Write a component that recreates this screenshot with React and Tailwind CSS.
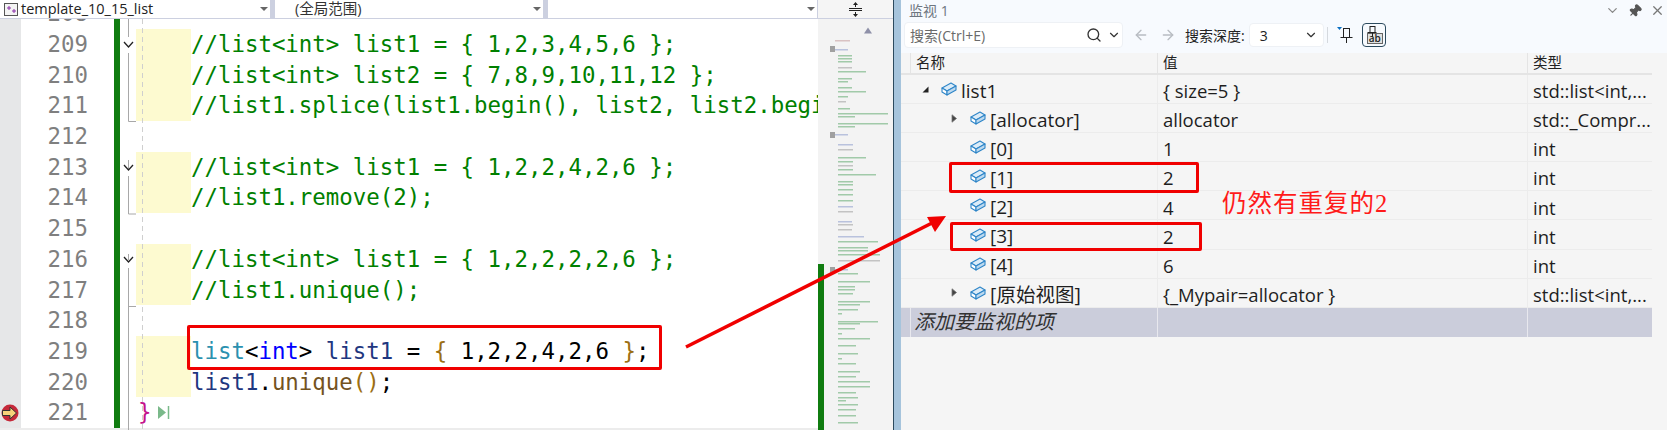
import React from "react";
import { Search, ChevronDown, ArrowLeft, ArrowRight, X, Pin } from "lucide-react";

const cm = "text-[#008000]";
const ty = "text-[#2b91af]";
const kw = "text-[#0000ff]";
const vr = "text-[#1f377f]";
const br = "text-[#9c6f13]";
const fn = "text-[#74531f]";

const codeLines = [
  { n: 208, mark: false },
  { n: 209, mark: true, code: [[cm, "//list<int> list1 = { 1,2,3,4,5,6 };"]] },
  { n: 210, mark: true, code: [[cm, "//list<int> list2 = { 7,8,9,10,11,12 };"]] },
  { n: 211, mark: true, code: [[cm, "//list1.splice(list1.begin(), list2, list2.begin());"]] },
  { n: 212, mark: false },
  { n: 213, mark: true, code: [[cm, "//list<int> list1 = { 1,2,2,4,2,6 };"]] },
  { n: 214, mark: true, code: [[cm, "//list1.remove(2);"]] },
  { n: 215, mark: false },
  { n: 216, mark: true, code: [[cm, "//list<int> list1 = { 1,2,2,2,2,6 };"]] },
  { n: 217, mark: true, code: [[cm, "//list1.unique();"]] },
  { n: 218, mark: false },
  {
    n: 219,
    mark: true,
    code: [
      [ty, "list"],
      ["text-black", "<"],
      [kw, "int"],
      ["text-black", "> "],
      [vr, "list1"],
      ["text-black", " = "],
      [br, "{"],
      ["text-black", " 1,2,2,4,2,6 "],
      [br, "}"],
      ["text-black", ";"],
    ],
  },
  {
    n: 220,
    mark: true,
    code: [
      [vr, "list1"],
      ["text-black", "."],
      [fn, "unique"],
      [br, "()"],
      ["text-black", ";"],
    ],
  },
];

// tiny code overview: y, x1, x2, colour (page coordinates minus the minimap origin)
const G = "#3f9a4f";
const S = "#8a8a8a";
const B = "#7488c4";
const miniRows = [
  [21, 17, 32, "#b88"], [30, 17, 30, B], [36, 20, 34, G], [39, 20, 34, G], [42, 20, 34, G],
  [48, 20, 34, S], [52, 20, 48, G], [59, 20, 34, G], [62, 20, 30, G], [68, 20, 34, G],
  [72, 20, 48, G], [77, 20, 30, G], [82, 20, 28, S], [89, 20, 32, G], [94, 20, 70, G],
  [97, 20, 37, G], [104, 20, 70, G], [107, 20, 37, G], [115, 17, 30, B], [125, 20, 35, B],
  [130, 20, 35, S], [138, 20, 48, G], [142, 20, 35, G], [146, 20, 35, S], [150, 20, 35, G],
  [155, 20, 58, G], [162, 20, 35, G], [165, 20, 35, G], [170, 20, 35, G], [175, 20, 35, G],
  [181, 20, 35, G], [187, 20, 35, B], [192, 20, 35, S], [202, 20, 34, B], [205, 20, 35, S],
  [210, 20, 34, S], [217, 20, 46, B], [222, 20, 60, G], [228, 20, 50, G], [231, 20, 50, G],
  [235, 20, 62, G], [241, 20, 62, S], [250, 17, 30, B], [254, 20, 40, G], [262, 20, 52, G],
  [267, 20, 37, G], [270, 20, 37, G], [274, 20, 35, G], [282, 20, 52, G], [285, 20, 42, G],
  [290, 20, 40, G], [294, 20, 24, G], [302, 20, 60, G], [304, 20, 42, G], [309, 20, 37, G],
  [314, 20, 24, G], [319, 20, 52, G], [326, 20, 38, G], [334, 20, 40, G], [339, 20, 24, G],
  [344, 20, 38, G], [352, 20, 42, G], [357, 20, 38, G], [362, 20, 52, G], [367, 20, 52, G],
  [373, 20, 38, G], [378, 20, 40, G], [381, 20, 28, G], [385, 20, 40, G], [390, 20, 38, G],
  [396, 20, 38, G], [403, 20, 40, G],
];

const watchRows = [
  { name: "list1", value: "{ size=5 }", type: "std::list<int,...", depth: 0, expand: "open" },
  { name: "[allocator]", value: "allocator", type: "std::_Compr...", depth: 1, expand: "closed" },
  { name: "[0]", value: "1", type: "int", depth: 1 },
  { name: "[1]", value: "2", type: "int", depth: 1 },
  { name: "[2]", value: "4", type: "int", depth: 1 },
  { name: "[3]", value: "2", type: "int", depth: 1 },
  { name: "[4]", value: "6", type: "int", depth: 1 },
  { name: "[原始视图]", value: "{_Mypair=allocator }", type: "std::list<int,...", depth: 1, expand: "closed", cjk: true },
];

function Dropdown({ width, label, icon }) {
  return (
    <div className={`${width} flex items-center h-full bg-white relative shrink-0`}>
      {icon}
      {label}
      <span className="absolute right-[2px] top-[7px] w-0 h-0 border-x-[4px] border-x-transparent border-t-[4px] border-t-[#666]"></span>
    </div>
  );
}

function FieldIcon() {
  return (
    <svg width="16" height="14" viewBox="0 0 16 14" className="shrink-0">
      <path d="M1 6 L10 1 L15 4 L6 9 Z" fill="#dcecf8" stroke="#2f86c8" strokeWidth="1.1" strokeLinejoin="round" />
      <path d="M1 6 L6 9 L6 13 L1 10 Z" fill="#fff" stroke="#2f86c8" strokeWidth="1.1" strokeLinejoin="round" />
      <path d="M6 9 L15 4 L15 8 L6 13 Z" fill="#bcd9ef" stroke="#2f86c8" strokeWidth="1.1" strokeLinejoin="round" />
    </svg>
  );
}

function Expander({ kind }) {
  if (kind === "open") {
    return (
      <svg width="7" height="7" viewBox="0 0 7 7" className="shrink-0">
        <path d="M6.5 .5 V6.5 H.5 Z" fill="#222" />
      </svg>
    );
  }
  if (kind === "closed") {
    return (
      <svg width="7" height="9" viewBox="0 0 7 9" className="shrink-0">
        <path d="M1 .8 L5.5 4.5 L1 8.2 Z" fill="#444" stroke="#777" strokeWidth=".8" />
      </svg>
    );
  }
  return <span className="w-[7px] shrink-0"></span>;
}

function WatchRow({ row }) {
  return (
    <div className="flex h-[29.1px] items-center border-b border-[#ececec] text-[18.5px] text-[#1e1e1e]">
      <div className="w-[256px] flex items-center">
        <div className={`flex items-center ${row.depth ? "pl-[50px]" : "pl-[21px]"}`}>
          <Expander kind={row.expand} />
          <span className="ml-[12px]"><FieldIcon /></span>
          <span className={`ml-[4px] pt-[4px] whitespace-nowrap ${row.cjk ? "text-[19.5px]" : "text-[19px]"}`}>{row.name}</span>
        </div>
      </div>
      <div className="w-[370px] pl-[5px] pt-[4px] h-full flex items-center border-l border-[#ececec] whitespace-nowrap">{row.value}</div>
      <div className="w-[125px] pl-[5px] pt-[4px] h-full flex items-center border-l border-[#ececec] whitespace-nowrap">{row.type}</div>
    </div>
  );
}

export default function App() {
  return (
    <div className="relative flex w-[1667px] h-[430px] overflow-hidden bg-white font-['Open_Sans','Noto_Sans_CJK_SC',sans-serif]">
      {/* editor */}
      <div className="relative w-[893px] shrink-0 flex flex-col">
        <div className="flex h-[19px] shrink-0 border-b border-[#ccd0e0] bg-[#ccd0e0] text-[14.5px] text-[#222] leading-none">
          <Dropdown
            width="w-[270px]"
            icon={
              <svg width="14" height="13" viewBox="0 0 14 13" className="ml-[4px] mr-[3px]">
                <rect x=".5" y=".5" width="13" height="12" fill="#f4f4f4" stroke="#555" />
                <path d="M3 5h4M5 3v4M8 8h4M10 6v4" stroke="#8a2fa8" strokeWidth="1" />
              </svg>
            }
            label={<span>template_10_15_list</span>}
          />
          <div className="w-[5px] shrink-0"></div>
          <Dropdown width="w-[268px]" label={<span className="ml-[20px] text-[#333]">(全局范围)</span>} />
          <div className="w-[5px] shrink-0"></div>
          <Dropdown width="w-[269px]" />
          <div className="flex-1 bg-[#f5f5f5] flex items-center justify-center ml-[1px]">
            <svg width="13" height="15" viewBox="0 0 13 15">
              <path d="M0 6.5h13M0 8.5h13" stroke="#222" />
              <path d="M6.5 0 L9 3 H7 V5 H6 V3 H4 Z M6.5 15 L9 12 H7 V10 H6 V12 H4 Z" fill="#222" />
            </svg>
          </div>
        </div>

        <div className="flex flex-1 min-h-0">
          <div className="relative flex-1 min-w-0 overflow-hidden font-['DejaVu_Sans_Mono',monospace]">
            <div className="-mt-[20.7px]">
              {codeLines.map((line) => (
                <div key={line.n} className="flex h-[30.7px] leading-[30.7px]">
                  <div className="w-[21px] shrink-0 bg-[#e6e7e8]"></div>
                  <div className="w-[67px] shrink-0 text-right text-[22.4px] text-[#7f7f7f]">{line.n}</div>
                  <div className="w-[26px] shrink-0"></div>
                  <div className="w-[6px] shrink-0 bg-[#107c10]"></div>
                  <div className="w-[16px] shrink-0"></div>
                  <div className={`w-[55px] shrink-0 ${line.mark ? "bg-[#fdfad0]" : ""}`}></div>
                  <div className="whitespace-pre text-[22.4px]">
                    {line.code?.map(([color, text], i) => (
                      <span key={i} className={color}>{text}</span>
                    ))}
                  </div>
                </div>
              ))}
              <div className="flex h-[30.7px] leading-[30.7px]">
                <div className="w-[21px] shrink-0 bg-[#e6e7e8] flex items-center justify-center">
                  <svg width="18" height="18" viewBox="0 0 18 18" className="-ml-[1px]">
                    <circle cx="9" cy="9" r="8.5" fill="#c5293a" />
                    <path d="M1.5 6.5 H9 V3 L15.5 9 L9 15 V11.5 H1.5 Z" fill="#f6d27a" stroke="#333" strokeWidth="1" />
                  </svg>
                </div>
                <div className="w-[67px] shrink-0 text-right text-[22.4px] text-[#7f7f7f]">221</div>
                <div className="w-[26px] shrink-0"></div>
                <div className="w-[6px] shrink-0 bg-[#107c10]"></div>
                <div className="w-[18px] shrink-0"></div>
                <div className="flex items-center text-[22.4px] text-[#c4128c]">
                  <span>{"}"}</span>
                  <svg width="13" height="15" viewBox="0 0 13 15" className="ml-[6px]">
                    <path d="M1 1 L9 7.5 L1 14 Z" fill="#7ab98a" />
                    <path d="M11.5 1 V14" stroke="#7ab98a" strokeWidth="1.5" />
                  </svg>
                </div>
              </div>
              <div className="h-[2px] bg-[#ececec]"></div>
            </div>
            {/* outline guides over the gutter */}
            <svg className="absolute left-0 top-0 pointer-events-none" width="150" height="411">
              <path d="M142.5 0V411" stroke="#cfcfcf" strokeDasharray="5 4" />
              <path d="M128.5 0V18M128.5 34V102.5H136M128.5 141V150M128.5 157V195H136M128.5 235V241M128.5 249V287.5H136M128.5 287V411" stroke="#a8a8a8" fill="none" />
              <path d="M124 24 L128.5 29 L133 24" transform="translate(0 -1)" stroke="#222" strokeWidth="1.3" fill="none" />
              <path d="M124 147 L128.5 152 L133 147" transform="translate(0 -1)" stroke="#222" strokeWidth="1.3" fill="none" />
              <path d="M124 239 L128.5 244 L133 239" transform="translate(0 -1)" stroke="#222" strokeWidth="1.3" fill="none" />
            </svg>
          </div>

          {/* minimap */}
          <div className="relative w-[75px] shrink-0 bg-[#f3f3f3] overflow-hidden">
            <svg width="75" height="411" className="blur-[0.5px]">
              <path d="M46 8 L54 8 L50 3 Z" transform="translate(0 5) scale(1 1.2)" fill="#8e90a8" />
              <rect x="12" y="27" width="5" height="6" fill="#a0a0a0" />
              <rect x="12" y="113" width="5" height="6" fill="#a0a0a0" />
              <rect x="12" y="248" width="5" height="6" fill="#a0a0a0" />
              {miniRows.map(([y, x1, x2, color], i) => (
                <rect key={i} x={x1} y={y} width={x2 - x1} height="1.5" fill={color} opacity=".45" />
              ))}
            </svg>
            <div className="absolute left-0 top-[245px] bottom-0 w-[6px] bg-[#107c10]"></div>
          </div>
        </div>
      </div>

      {/* watch window */}
      <div className="w-[8px] shrink-0 border-l border-[#2c4a5e] bg-[#a6c4dc]"></div>
      <div className="flex-1 min-w-0 flex flex-col bg-[#f5f5f5]">
        <div className="h-[53px] shrink-0 bg-[#f7fafe] flex flex-col">
          <div className="h-[21px] flex items-center text-[14px] text-[#6e7680] pl-[8px]">
            <span>监视 1</span>
            <div className="ml-auto flex items-center gap-[8px] pr-[2px]">
              <ChevronDown size={15} className="text-[#888]" />
              <Pin size={14} className="text-[#555] fill-[#555] rotate-45" />
              <X size={15} className="text-[#777]" />
            </div>
          </div>
          <div className="flex items-center h-[32px] pb-[4px] text-[14px] text-[#222]">
            <div className="ml-[3px] w-[219px] h-[26px] bg-white rounded-[4px] border border-[#eef1f5] flex items-center pl-[5px] pr-[1px] text-[#6a6a6a]">
              <span>搜索(Ctrl+E)</span>
              <Search size={16} className="ml-auto text-[#333]" />
              <ChevronDown size={14} className="ml-[5px] text-[#333]" />
            </div>
            <ArrowLeft size={16} className="ml-[10px] text-[#b8bcc2]" />
            <ArrowRight size={16} className="ml-[11px] text-[#b8bcc2]" />
            <span className="ml-[9px] whitespace-nowrap">搜索深度:</span>
            <div className="ml-[4px] w-[75px] h-[24px] bg-white rounded-[4px] border border-[#eef1f5] flex items-center pl-[10px] pr-[5px]">
              <span>3</span>
              <ChevronDown size={14} className="ml-auto text-[#333]" />
            </div>
            <div className="ml-[3px] w-px h-[16px] bg-[#d5d9de]"></div>
            <svg width="18" height="18" viewBox="0 0 18 18" className="ml-[9px]">
              <path d="M0 1h5L2.5 4z" fill="#0a6fc2" />
              <rect x="6.5" y="2.5" width="6" height="9" fill="none" stroke="#222" />
              <path d="M3.5 11.5h12M9.5 12v5" stroke="#222" />
            </svg>
            <div className="ml-[7px] w-[24px] h-[24px] rounded-[4px] border border-[#2c4a5e] relative flex items-end justify-end p-[2px]">
              <svg width="10" height="12" viewBox="0 0 10 12" className="absolute left-[4px] top-[2px]">
                <rect x="3" y=".5" width="5" height="6" fill="none" stroke="#222" />
                <path d="M.5 6.5h9M5.5 7v4" stroke="#222" />
              </svg>
              <span className="border border-[#666] bg-[#e0e0e0] px-[1px] text-[10px] leading-[9px] font-semibold">ab</span>
            </div>
          </div>
        </div>

        {/* table */}
        <div className="w-[751px]">
          <div className="flex h-[22px] items-center border-b-2 border-[#e4e4e4] text-[14.5px] text-[#222]">
            <div className="w-[9px] h-full"></div>
            <div className="w-[247px] h-full flex items-center pl-[5px] border-l border-[#e4e4e4]">名称</div>
            <div className="w-[370px] h-full flex items-center pl-[5px] border-l border-[#e4e4e4]">值</div>
            <div className="w-[125px] h-full flex items-center pl-[5px] border-l border-[#e4e4e4]">类型</div>
          </div>
          {watchRows.map((row) => (
            <WatchRow key={row.name} row={row} />
          ))}
          <div className="flex h-[29px] bg-[#cbcddb] text-[20px] italic text-[#333]">
            <div className="w-[9px] h-full"></div>
            <div className="w-[247px] h-full flex items-center pl-[3px] border-l border-[#e8e8ee] whitespace-nowrap">添加要监视的项</div>
            <div className="w-[370px] h-full border-l border-[#e8e8ee]"></div>
            <div className="w-[125px] h-full border-l border-[#e8e8ee]"></div>
          </div>
        </div>
      </div>

      {/* red annotations drawn over the screenshot */}
      <div className="absolute left-[187px] top-[325px] w-[475px] h-[45px] border-[3px] border-[#f00000] rounded-[2px]"></div>
      <div className="absolute left-[949px] top-[162px] w-[250px] h-[31px] border-[3px] border-[#f00000] rounded-[2px]"></div>
      <div className="absolute left-[950px] top-[222px] w-[252px] h-[29px] border-[3px] border-[#f00000] rounded-[2px]"></div>
      <svg className="absolute left-0 top-0 pointer-events-none" width="1667" height="430">
        <path d="M686 347 L934 222" stroke="#f00000" strokeWidth="3.5" />
        <path d="M946 216 L927 217 L935 232 Z" fill="#f00000" />
      </svg>
      <div className="absolute left-[1222px] top-[186px] text-[24.5px] leading-[32px] tracking-[1px] text-[#ff1a1a] whitespace-nowrap font-['Noto_Sans_CJK_SC','Liberation_Serif',serif]">
        仍然有重复的<span className="font-['Liberation_Serif',serif]">2</span>
      </div>
    </div>
  );
}
